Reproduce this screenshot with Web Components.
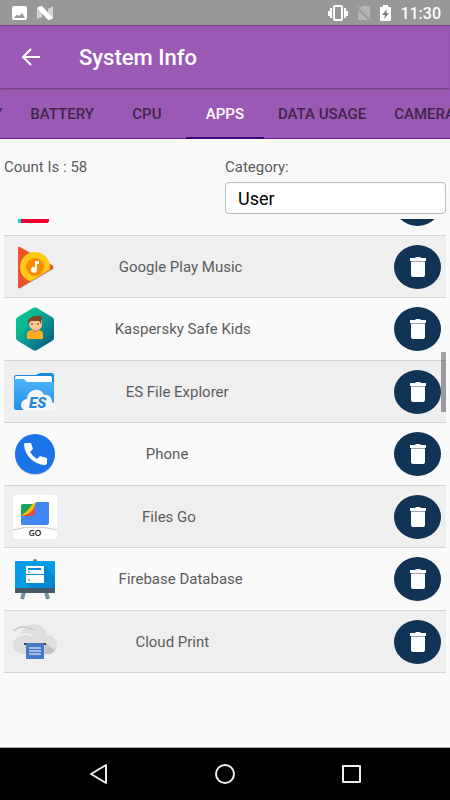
<!doctype html>
<html lang="en">
  <head>
    <meta charset="utf-8">
    <meta name="viewport" content="width=device-width, initial-scale=1">
    <title>System Info</title>
    <style>
      html, body {
        margin: 0;
        padding: 0;
        height: 100%;
      }
      body {
        font-family: Roboto, "Noto Sans", sans-serif;
        font-size: 15px;
        color: #5c5c5c;
        background: #fafafa;
      }
    </style>
  </head>
  <body>
    <template id="info-screen" data-component>
      <style>
        :host {
          min-height: 100%;
          display: flex;
          flex-direction: column;
        }
        main {
          flex: 1;
          padding: 0 4px;
        }
      </style>
      <slot name="top"></slot>
      <main><slot></slot></main>
      <slot name="bottom"></slot>
    </template>

    <template id="status-bar" data-component>
      <style>
        :host {
          display: flex;
          align-items: center;
          height: 25px;
          padding: 0 9px 0 12px;
          gap: 9px;
          background: #989898;
          color: #fff;
          font-size: 16px;
          font-weight: 500;
        }
        .space { flex: 1; }
        svg { display: block; }
        time { line-height: 24px; padding-top: 2px; }
      </style>
      <svg width="16" height="16" viewBox="0 0 16 16">
        <path fill="#fff" fill-rule="evenodd" d="M2 1h11a2 2 0 0 1 2 2v10a2 2 0 0 1-2 2H2a2 2 0 0 1-2-2V3a2 2 0 0 1 2-2zM2 13h11L10 8 7 11 5 9.500z"/>
      </svg>
      <svg width="16" height="16" viewBox="0 0 16 16">
        <path fill="#d4d4d4" d="M0 3l5-2v11l-5 2zM11 4l5-3v12l-5 2z"/>
        <path fill="#fff" d="M0 3q2-2 5-2l11 12q-2 2-5 2z"/>
      </svg>
      <span class="space"></span>
      <svg width="20" height="16" viewBox="0 0 20 16">
        <rect x="6" y="1" width="8" height="14" rx="1" fill="none" stroke="#fff" stroke-width="2"/>
        <path stroke="#fff" stroke-width="2" d="M3 3v10M17 3v10M1 6v5M19 6v5"/>
      </svg>
      <svg width="14" height="16" viewBox="0 0 14 16">
        <path fill="#b6b6b6" d="M5 1h7q1 0 1 1v11L3 3zM1 5l10 10H2q-1 0-1-1z"/>
        <path stroke="#b6b6b6" stroke-width="1" d="M0 1l14 14"/>
      </svg>
      <svg width="11" height="16" viewBox="0 0 11 16">
        <path fill="#fff" d="M3 0h5v2h2q1 0 1 1v12q0 1-1 1H1q-1 0-1-1V3q0-1 1-1h2z"/>
        <path fill="#777" d="M7 4L2 10h3l-1 4 5-6H6z"/>
      </svg>
      <time>11:30</time>
    </template>

    <template id="title-bar" data-component>
      <style>
        :host {
          position: relative;
          display: flex;
          align-items: center;
          height: 63px;
          padding-left: 18px;
          gap: 35px;
          background: #9b59b6;
          box-shadow: 0 1px 2px rgba(0, 0, 0, .35), inset 0 2px 2px -1px rgba(0, 0, 0, .25);
          color: #fff;
        }
        button {
          display: flex;
          padding: 0;
          border: 0;
          background: none;
        }
        h1 {
          margin: 0;
          padding-top: 2px;
          font-size: 22px;
          font-weight: 500;
          line-height: 28px;
        }
      </style>
      <button aria-label="Back">
        <svg width="26" height="26" viewBox="0 0 26 26" fill="none" stroke="#fff" stroke-width="2">
          <path d="M22 13H5M13 5l-8 8 8 8"/>
        </svg>
      </button>
      <h1><slot></slot></h1>
    </template>

    <template id="tab-strip" data-component>
      <style>
        :host {
          display: block;
          background: #9b59b6;
        }
        nav {
          display: flex;
          height: 51px;
          overflow-x: auto;
          scrollbar-width: none;
          box-shadow: inset 0 -1px #7d1a99;
        }
      </style>
      <nav><slot></slot></nav>
    </template>

    <template id="tab-item" data-component>
      <style>
        :host {
          flex: none;
          display: flex;
          min-width: 78px;
        }
        button {
          flex: 1;
          padding: 2px 14px 0;
          border: 0;
          border-bottom: 2px solid transparent;
          background: none;
          font: inherit;
          font-weight: 500;
          color: #3f2549;
          white-space: nowrap;
        }
        :host([selected]) button {
          color: #fff;
          border-color: #3c0078;
        }
      </style>
      <button><slot></slot></button>
    </template>

    <template id="filter-row" data-component>
      <style>
        :host {
          display: grid;
          grid-template-columns: 1fr 1fr;
          padding: 18px 0 5px;
          line-height: 20px;
        }
        label { display: block; margin-bottom: 5px; }
        select {
          appearance: none;
          display: block;
          box-sizing: border-box;
          width: 100%;
          height: 32px;
          padding: 0 12px;
          border: 1px solid #bbb;
          border-radius: 4px;
          background: #fff;
          color: #000;
          font: 18px Roboto, sans-serif;
        }
      </style>
      <div><slot></slot></div>
      <div>
        <label for="category">Category:</label>
        <select id="category">
          <option>User</option>
          <option>System</option>
        </select>
      </div>
    </template>

    <template id="app-list" data-component>
      <style>
        :host {
          display: block;
          position: relative;
        }
        .rows {
          height: calc(100vh - 346px);
          overflow-y: auto;
          scrollbar-width: none;
        }
        /* overlay scroll thumb */
        .thumb {
          position: absolute;
          top: 133px;
          right: 0;
          width: 5px;
          height: 60px;
          background: rgba(0, 0, 0, .35);
        }
      </style>
      <div class="rows" role="list"><slot></slot></div>
      <div class="thumb"></div>
    </template>

    <template id="app-row" data-component>
      <style>
        :host {
          display: flex;
          align-items: center;
          box-sizing: border-box;
          height: 63px;
          border-bottom: 1px solid #d4d4d4;
        }
        :host(:nth-child(even)) {
          height: 62px;
          background: #efefef;
        }
        ::slotted(svg) {
          flex: none;
          width: 48px;
          height: 48px;
          margin-left: 7px;
        }
        .name {
          flex: 2 1 auto;
          text-align: center;
          line-height: 20px;
        }
        .action {
          flex: 1 1 84px;
          display: flex;
          justify-content: flex-end;
          padding-right: 5px;
          box-sizing: border-box;
        }
        button {
          display: flex;
          align-items: center;
          justify-content: center;
          width: 47px;
          height: 44px;
          padding: 0;
          border: 0;
          border-radius: 50%;
          background: #113355;
        }
      </style>
      <slot name="icon"></slot>
      <span class="name"><slot></slot></span>
      <span class="action">
        <button aria-label="Uninstall">
          <svg width="16" height="20" viewBox="0 0 16 20" fill="#fff">
            <path d="M0 1h5l1-1h4l1 1h5v3H0z"/>
            <path fill="#9aa6b8" d="M1 4h14v1H1z"/>
            <path d="M1 5h14v13q0 2-2 2H3q-2 0-2-2z"/>
          </svg>
        </button>
      </span>
    </template>

    <template id="nav-bar" data-component>
      <style>
        :host {
          display: grid;
          grid-template-columns: 1fr 1fr 1fr;
          height: 52px;
          padding: 0 36px;
          border-top: 1px solid #aaa;
          background: #000;
        }
        button {
          display: flex;
          align-items: center;
          justify-content: center;
          padding: 0;
          border: 0;
          background: none;
        }
        svg { fill: none; stroke: #eee; stroke-width: 2; stroke-linejoin: round; }
      </style>
      <button aria-label="Back"><svg width="22" height="22" viewBox="0 0 22 22"><path d="M3 11L18 2v18z"/></svg></button>
      <button aria-label="Home"><svg width="22" height="22" viewBox="0 0 22 22"><circle cx="11" cy="11" r="9"/></svg></button>
      <button aria-label="Recent apps"><svg width="22" height="22" viewBox="0 0 22 22"><path d="M3 3h17v16H3z"/></svg></button>
    </template>

    <info-screen>
      <status-bar slot="top"></status-bar>
      <title-bar slot="top">System Info</title-bar>
      <tab-strip slot="top">
        <tab-item>MEMORY</tab-item>
        <tab-item>BATTERY</tab-item>
        <tab-item>CPU</tab-item>
        <tab-item selected>APPS</tab-item>
        <tab-item>DATA USAGE</tab-item>
        <tab-item>CAMERA</tab-item>
      </tab-strip>

      <filter-row>Count Is : 58</filter-row>
      <app-list>
        <app-row role="listitem">
          <svg slot="icon" viewBox="0 0 48 48">
            <path fill="#00d8f0" d="M5 2h15v41H7z"/>
            <path fill="#f5002f" d="M10 4h29l-1 37q0 2-2 2H10z"/>
          </svg>
          TikTok
        </app-row>
        <app-row role="listitem">
          <svg slot="icon" viewBox="0 0 48 48">
            <clipPath id="play"><path d="M0 0h48v20l-5 4L7 46z"/></clipPath>
            <path fill="#bbb" d="M8 46l35-20-1-2L8 43z"/>
            <path fill="#f0512d" d="M7 5q0-2 2-1l32 18q3 2 0 4L9 45q-2 1-2-1z"/>
            <g clip-path="url(#play)">
              <circle cx="24" cy="24" r="15" fill="#ffca16"/>
              <circle cx="24" cy="24" r="9" fill="#fb8c00"/>
            </g>
            <path fill="#fff" d="M24 18h4v3h-2v6a3 3 0 1 1-2-3z"/>
          </svg>
          Google Play Music
        </app-row>
        <app-row role="listitem">
          <svg slot="icon" viewBox="0 0 48 48">
            <linearGradient id="hex" x1="0" y1="0" x2="1" y2="1">
              <stop offset="0" stop-color="#12d69a"/>
              <stop offset=".5" stop-color="#0a9a94"/>
              <stop offset="1" stop-color="#05507f"/>
            </linearGradient>
            <path fill="url(#hex)" d="M22 3q2-1 4 0l15 9q2 1 2 3v18q0 2-2 3l-15 9q-2 1-4 0L7 36q-2-1-2-3V15q0-2 2-3z"/>
            <path fill="#07c08d" opacity=".6" d="M7 12L22 3q2-1 4 0l6 4-15 10-5 12-7 3V15q0-2 2-3z"/>
            <path fill="#ffad1f" d="M16 34v-5q0-3 4-4h8q4 1 4 4v5z"/>
            <path fill="#d98b5c" d="M21 22h6v4l-3 2-3-2z"/>
            <path fill="#fcc68f" d="M18 15h13v4q0 6-6 6t-7-6z"/>
            <path fill="#7b4a2c" d="M17 19q-1-5 2-6 3-3 8-2 4-1 4 2l-1 6-2-3h-8z"/>
            <path stroke="#59402e" stroke-width="1" d="M21 18v2M27 18v2"/>
          </svg>
          Kaspersky Safe Kids
        </app-row>
        <app-row role="listitem">
          <svg slot="icon" viewBox="0 0 48 48">
            <path fill="#1689dc" d="M5 7h20l4-2h11q3 0 3 3v12H3V9q0-2 2-2z"/>
            <path fill="#fff" d="M5 8h34q2 0 2 2v4H4v-4q0-2 1-2z"/>
            <linearGradient id="folder" x1="0" y1="0" x2="0" y2="1">
              <stop offset="0" stop-color="#4db5fa"/>
              <stop offset="1" stop-color="#238fe9"/>
            </linearGradient>
            <path fill="url(#folder)" d="M3 11h10l3 3h27v26q0 2-2 2H5q-2 0-2-2z"/>
            <path fill="#f5f6f7" d="M17 43c-9 0-9-11-1-12 0-10 14-13 17-4 6-1 8 4 8 7 6 2 5 9-1 9z"/>
            <text x="18" y="40" font-family="Roboto" font-size="15" font-weight="900" font-style="italic" fill="#2389d9">ES</text>
          </svg>
          ES File Explorer
        </app-row>
        <app-row role="listitem">
          <svg slot="icon" viewBox="0 0 48 48">
            <circle cx="24" cy="25" r="20" fill="#ccc"/>
            <circle cx="24" cy="24" r="20" fill="#1a73e8"/>
            <path fill="#fff" d="M14 13q-1 0-1 2c1 10 9 19 20 20q3 0 3-2v-5l-7-2-3 3q-4-2-7-7l3-3-2-6z"/>
          </svg>
          Phone
        </app-row>
        <app-row role="listitem">
          <svg slot="icon" viewBox="0 0 48 48">
            <rect x="2" y="2" width="44" height="44" rx="4" fill="#fff"/>
            <path fill="#4285f4" d="M10 17L26 9h11q1 0 1 1v20q0 2-2 2H11q-1 0-1-1z"/>
            <path fill="#1aa260" d="M12 11h14L10 24V13q0-2 2-2z"/>
            <path fill="#e04f3d" d="M24 12v9l-2 2H10z"/>
            <path fill="#ffc107" d="M25 9q-2 12-15 14 6-4 10-10 1-2 5-4z"/>
            <path fill="none" stroke="#ccc" d="M2 37q22-6 44 0"/>
            <text x="24" y="43" text-anchor="middle" font-family="Lato" font-size="8" font-weight="700" fill="#222">GO</text>
          </svg>
          Files Go
        </app-row>
        <app-row role="listitem">
          <svg slot="icon" viewBox="0 0 48 48">
            <circle cx="24" cy="6" r="2" fill="#607d8b"/>
            <path stroke="#78909c" stroke-width="4" d="M13 37l-2 7M35 37l2 7"/>
            <rect x="4" y="6" width="40" height="32" rx="1" fill="#039be5"/>
            <path fill="#0288d1" d="M33 11l11 11v11H20l-5-5z"/>
            <path fill="#455a64" d="M4 33h40v4q0 1-1 1H5q-1 0-1-1z"/>
            <path fill="#fff" d="M15 11h18v8H15zM15 20h18v8H15z"/>
            <path stroke="#0288d1" stroke-width="2" d="M17 14h13"/>
            <path stroke="#0288d1" stroke-width="1" d="M17 17h2M17 25h2"/>
          </svg>
          Firebase Database
        </app-row>
        <app-row role="listitem">
          <svg slot="icon" viewBox="0 0 48 48">
            <path fill="#dedede" d="M12 36C-1 36-1 21 9 18 14 2 33 3 36 17c13 1 13 19 1 19z"/>
            <path fill="#c4c4c4" d="M34 25l10 7q-3 4-7 4h-4z"/>
            <path fill="none" stroke="#ededed" stroke-width="2" d="M8 18q7-4 13 0"/>
            <path fill="none" stroke="#cfcfcf" stroke-width="2" d="M3 13q8-8 19-1"/>
            <path stroke="#444" stroke-width="2" d="M13 26h22"/>
            <path fill="#4678c4" d="M15 25h18v16H15z"/>
            <path stroke="#fff" stroke-width="1" d="M18 30h12M18 33h12M18 36h12"/>
          </svg>
          Cloud Print
        </app-row>
      </app-list>

      <nav-bar slot="bottom"></nav-bar>
    </info-screen>

    <script>
      document.querySelectorAll("[data-component]").forEach((template) => {
        customElements.define(template.id, class extends HTMLElement {
          constructor() {
            super();
            this.attachShadow({ mode: "open" })
              .appendChild(template.content.cloneNode(true));
          }
        });
      });

      // keep the selected tab in the middle of the strip
      const strip = document.querySelector("tab-strip").shadowRoot.querySelector("nav");
      const tab = document.querySelector("tab-item[selected]").getBoundingClientRect();
      strip.scrollLeft += tab.left + tab.width / 2 - strip.clientWidth / 2;

      // the list opens at its end
      const rows = document.querySelector("app-list").shadowRoot.querySelector(".rows");
      rows.scrollTop = rows.scrollHeight;
    </script>
  </body>
</html>
